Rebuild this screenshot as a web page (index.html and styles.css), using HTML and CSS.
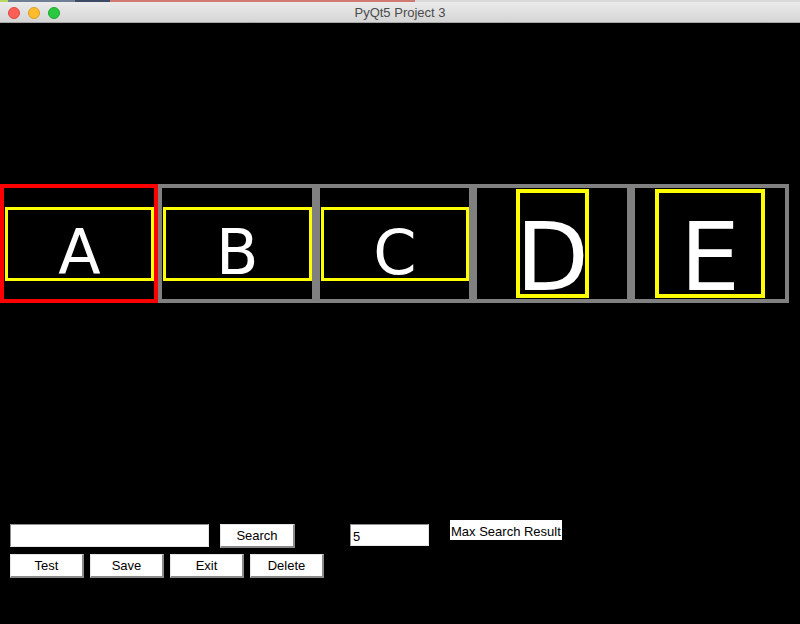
FILE: index.html
```html
<!DOCTYPE html>
<html>
<head>
<meta charset="utf-8">
<link rel="stylesheet" href="styles.css">
<title>PyQt5 Project 3</title>
</head>
<body>
<div class="window">
  <div class="desk-strip"></div>
  <div class="titlebar">
    <div class="lights">
      <span class="light red"></span>
      <span class="light yellow"></span>
      <span class="light green"></span>
    </div>
    <div class="title">PyQt5 Project 3</div>
    <div></div>
  </div>
  <div class="content">
    <div class="cards">
      <div class="card selected"><div class="wide">A</div></div>
      <div class="card"><div class="wide">B</div></div>
      <div class="card"><div class="wide">C</div></div>
      <div class="card center"><div class="tall narrow">D</div></div>
      <div class="card center"><div class="tall square">E</div></div>
    </div>
    <div class="controls">
      <div class="row">
        <input class="field search-field" type="text" value="">
        <button class="btn search-btn">Search</button>
        <input class="field num-field" type="text" value="5">
        <span class="max-label">Max Search Result</span>
      </div>
      <div class="row buttons">
        <button class="btn">Test</button>
        <button class="btn">Save</button>
        <button class="btn">Exit</button>
        <button class="btn">Delete</button>
      </div>
    </div>
  </div>
</div>
</body>
</html>
```
FILE: styles.css
```css
html, body {
  margin: 0;
  padding: 0;
  background: #000;
}
body {
  width: 800px;
  height: 624px;
  overflow: hidden;
  font-family: "Liberation Sans", Arial, sans-serif;
}
.window {
  display: flex;
  flex-direction: column;
  height: 624px;
}
.desk-strip {
  height: 2px;
  background: linear-gradient(to right, #b8d860 0, #b8d860 8px, #6f7f95 8px, #6f7f95 75px, #3b4a66 75px, #3b4a66 110px, #cf7a72 110px, #cf7a72 415px, #d9d9d9 415px);
}
.titlebar {
  height: 20px;
  border-bottom: 1px solid #a8a8a8;
  background: linear-gradient(#ebebeb, #d5d5d5);
  display: grid;
  grid-template-columns: 1fr auto 1fr;
  align-items: center;
}
.lights {
  display: flex;
  gap: 8px;
  padding-left: 8px;
  padding-top: 1px;
}
.light {
  width: 12px;
  height: 12px;
  border-radius: 50%;
  box-sizing: border-box;
}
.light.red { background: #fc5f57; border: 1px solid #df4a42; }
.light.yellow { background: #fdbc2e; border: 1px solid #de9f22; }
.light.green { background: #28c840; border: 1px solid #1eab2f; }
.title {
  font-size: 13px;
  color: #4b4b4b;
  padding-top: 1px;
}
.content {
  padding-top: 161px;
}
.cards {
  display: flex;
  width: 789px;
  height: 119px;
}
.card {
  flex: 1;
  border: 4px solid #808080;
  display: flex;
  align-items: center;
  min-width: 0;
}
.card.selected {
  border-color: #ff0000;
}
.card.center {
  justify-content: center;
}
.wide {
  flex: 1;
  margin-left: 1px;
  height: 74px;
  box-sizing: border-box;
  border: 3px solid #ffff00;
  color: #fff;
  font-family: "DejaVu Sans", sans-serif;
  font-size: 62px;
  line-height: 62px;
  text-align: center;
  padding-top: 12px;
  overflow: visible;
}
.tall {
  height: 109px;
  box-sizing: border-box;
  border: 4px solid #ffff00;
  color: #fff;
  font-family: "DejaVu Sans", sans-serif;
  font-size: 95px;
  line-height: 95px;
  text-align: center;
  padding-top: 17px;
  display: flex;
  justify-content: center;
}
.narrow {
  width: 73px;
}
.square {
  width: 110px;
}
.controls {
  margin-top: 221px;
  display: flex;
  flex-direction: column;
  gap: 6px;
  padding-left: 10px;
}
.row {
  display: flex;
  align-items: flex-start;
}
.buttons {
  gap: 6px;
}
.field {
  appearance: none;
  -webkit-appearance: none;
  margin: 0;
  box-sizing: border-box;
  background: #fff;
  border-top: 1px solid #8f8f8f;
  border-left: 1px solid #8f8f8f;
  border-right: 1px solid #e6e6e6;
  border-bottom: 1px solid #e6e6e6;
  font-family: "Liberation Sans", Arial, sans-serif;
  font-size: 13px;
  color: #000;
  padding: 2px 2px 0;
  outline: none;
}
.search-field {
  width: 199px;
  height: 23px;
}
.num-field {
  width: 79px;
  height: 22px;
  margin-left: 55px;
}
.btn {
  appearance: none;
  -webkit-appearance: none;
  margin: 0;
  box-sizing: border-box;
  width: 74px;
  height: 24px;
  background: #fff;
  border-top: 1px solid #e4e4e4;
  border-left: 1px solid #e4e4e4;
  border-right: 2px solid #8a8a8a;
  border-bottom: 2px solid #8a8a8a;
  font-family: "Liberation Sans", Arial, sans-serif;
  font-size: 13px;
  color: #000;
  padding: 0;
}
.search-btn {
  margin-left: 11px;
  width: 75px;
}
.max-label {
  margin-left: 21px;
  margin-top: -4px;
  box-sizing: border-box;
  height: 20px;
  line-height: 18px;
  padding-top: 3px;
  background: #fff;
  color: #000;
  font-size: 13px;
  padding-left: 1px;
  padding-right: 1px;
}
```
